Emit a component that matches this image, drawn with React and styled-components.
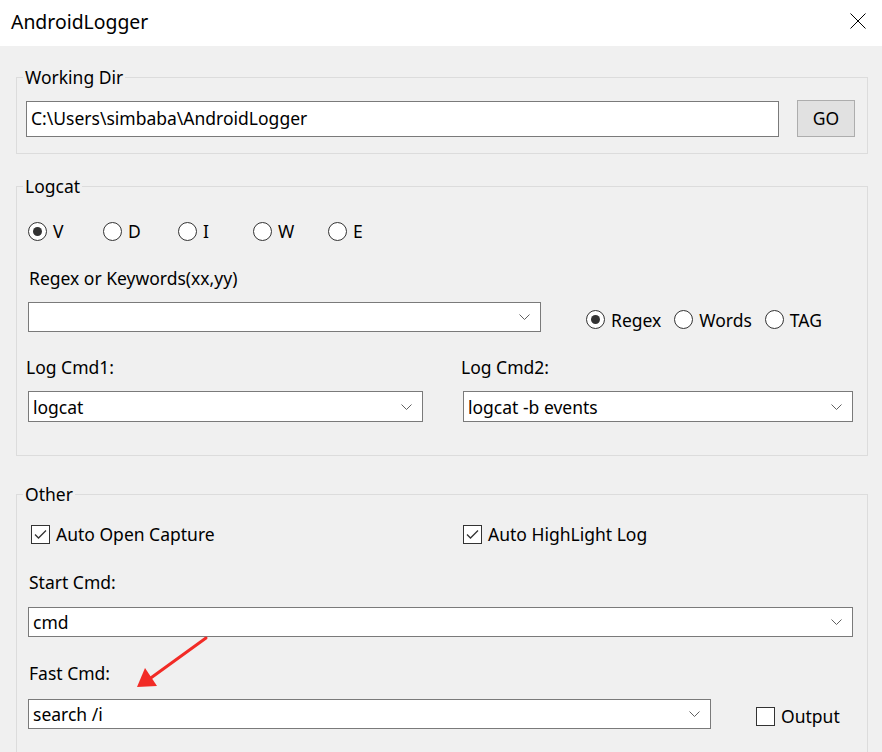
import React from 'react';
import styled, { createGlobalStyle } from 'styled-components';

const GlobalStyle = createGlobalStyle`
  html, body {
    margin: 0;
    padding: 0;
  }
  body {
    background: #f0f0f0;
    font-family: 'Segoe UI', 'Noto Sans', sans-serif;
    color: #000;
  }
`

const FONT = '17.5px';

const Window = styled.div`
  position: relative;
  width: 882px;
  height: 752px;
  overflow: hidden;
  background: #f0f0f0;
  display: flex;
  flex-direction: column;
`
const TitleBar = styled.div`
  height: 46px;
  flex-shrink: 0;
  box-sizing: border-box;
  padding: 0 16px 0 11px;
  background: #fff;
  display: flex;
  align-items: center;
  justify-content: space-between;
`
const Title = styled.div`
  font-size: 19.4px;
  line-height: 24px;
  margin-top: -3px;
`
const CloseIcon = styled.svg`
  width: 16px;
  height: 16px;
  margin-top: -5px;
`
const Body = styled.div`
  padding: 20px 14px 0 16px;
  display: flex;
  flex-direction: column;
`
const Group = styled.fieldset`
  margin: ${p => p.$top || 0}px 0 0;
  padding: 0;
  min-width: 0;
  border: 1px solid #dcdcdc;
`
const Legend = styled.legend`
  margin-left: 6px;
  padding: 0 2px;
  font-size: ${FONT};
  line-height: 22px;
`
const GroupInner = styled.div`
  padding: ${p => p.$pad};
  display: flex;
  flex-direction: column;
`
const Row = styled.div`
  display: flex;
  align-items: center;
  margin-top: ${p => p.$top || 0}px;
`
const TextBox = styled.div`
  flex: 1;
  height: 36px;
  box-sizing: border-box;
  padding: 0 0 2px 4px;
  border: 1px solid #7a7a7a;
  background: #fff;
  display: flex;
  align-items: center;
  font-size: ${FONT};
`
const GoButton = styled.button`
  width: 58px;
  height: 37px;
  margin: -2px 0 0 18px;
  padding: 0;
  border: 1px solid #adadad;
  background: #e1e1e1;
  font-family: inherit;
  font-size: ${FONT};
  color: #000;
`
const Combo = styled.div`
  width: ${p => (p.$width ? `${p.$width}px` : 'auto')};
  flex: ${p => (p.$width ? 'none' : 1)};
  height: ${p => p.$height || 30}px;
  box-sizing: border-box;
  padding: 0 10px 0 4px;
  border: 1px solid #7a7a7a;
  background: #fff;
  display: flex;
  align-items: center;
  justify-content: space-between;
  font-size: ${FONT};
`
const Chevron = styled.svg`
  width: 11px;
  height: 6px;
  flex-shrink: 0;
`
const Label = styled.div`
  font-size: ${FONT};
  line-height: 24px;
  margin-top: ${p => p.$top || 0}px;
  margin-left: ${p => p.$left || 0}px;
`
const LevelRow = styled.div`
  display: grid;
  grid-template-columns: repeat(5, 75px);
`
const SideGroup = styled.div`
  display: flex;
  align-items: center;
  gap: 13px;
  margin: ${p => p.$shift || 0}px 0 0 45px;
`
const Option = styled.div`
  display: flex;
  align-items: center;
  gap: 6px;
  height: 24px;
  font-size: ${FONT};
`
const RadioCircle = styled.span`
  width: 19px;
  height: 19px;
  box-sizing: border-box;
  border: 1px solid #333;
  border-radius: 50%;
  background: #fff;
  display: flex;
  align-items: center;
  justify-content: center;

  &::after {
    content: '';
    display: ${p => (p.$checked ? 'block' : 'none')};
    width: 9px;
    height: 9px;
    border-radius: 50%;
    background: #333;
  }
`
const CheckBox = styled.span`
  width: 19px;
  height: 19px;
  box-sizing: border-box;
  border: 1px solid #333;
  background: #fff;
  display: flex;
  align-items: center;
  justify-content: center;
`
const CmdGrid = styled.div`
  display: grid;
  grid-template-columns: 395px 1fr;
  column-gap: 40px;
  margin-top: 23px;
`
const Column = styled.div`
  display: flex;
  flex-direction: column;
`
const CheckGrid = styled.div`
  display: grid;
  grid-template-columns: 432px 1fr;
  padding-left: 3px;
`
const Arrow = styled.svg`
  position: absolute;
  left: 130px;
  top: 630px;
  width: 90px;
  height: 65px;
  pointer-events: none;
`

const ChevronIcon = () => (
  <Chevron viewBox="0 0 11 6">
    <polyline points="0.5,0.5 5.5,5.5 10.5,0.5" fill="none" stroke="#606060" strokeWidth="1" />
  </Chevron>
)

const Radio = ({ label, checked }) => (
  <Option>
    <RadioCircle $checked={checked} />
    {label}
  </Option>
)

const Check = ({ label, checked }) => (
  <Option>
    <CheckBox>
      {checked && (
        <svg width="13" height="11" viewBox="0 0 13 11">
          <polyline points="1,5.5 4.5,9 12,1.5" fill="none" stroke="#333" strokeWidth="1.3" />
        </svg>
      )}
    </CheckBox>
    {label}
  </Option>
)

const DropBox = ({ value, width, height }) => (
  <Combo $width={width} $height={height}>
    <span>{value}</span>
    <ChevronIcon />
  </Combo>
)

const levels = ['V', 'D', 'I', 'W', 'E'];

const App = () => {
  return (
    <Window>
      <GlobalStyle />
      <TitleBar>
        <Title>AndroidLogger</Title>
        <CloseIcon viewBox="0 0 16 16">
          <path d="M0.5 0.5 L15.5 15.5 M15.5 0.5 L0.5 15.5" stroke="#000" strokeWidth="1" fill="none" />
        </CloseIcon>
      </TitleBar>

      <Body>
        <Group>
          <Legend>Working Dir</Legend>
          <GroupInner $pad="13px 12px 16px 9px">
            <Row>
              <TextBox>C:\Users\simbaba\AndroidLogger</TextBox>
              <GoButton>GO</GoButton>
            </Row>
          </GroupInner>
        </Group>

        <Group $top={21}>
          <Legend>Logcat</Legend>
          <GroupInner $pad="22px 14px 33px 11px">
            <LevelRow>
              {levels.map((lv, i) => (
                <Radio key={lv} label={lv} checked={i === 0} />
              ))}
            </LevelRow>
            <Label $top={23} $left={1}>Regex or Keywords(xx,yy)</Label>
            <Row $top={12}>
              <DropBox value="" width={513} />
              <SideGroup $shift={5}>
                <Radio label="Regex" checked />
                <Radio label="Words" />
                <Radio label="TAG" />
              </SideGroup>
            </Row>
            <CmdGrid>
              <Column>
                <Label $left={-2}>Log Cmd1:</Label>
                <Row $top={12}>
                  <DropBox value="logcat" height={31} />
                </Row>
              </Column>
              <Column>
                <Label $left={-2}>Log Cmd2:</Label>
                <Row $top={12}>
                  <DropBox value="logcat -b events" height={31} />
                </Row>
              </Column>
            </CmdGrid>
          </GroupInner>
        </Group>

        <Group $top={27}>
          <Legend>Other</Legend>
          <GroupInner $pad="17px 14px 40px 11px">
            <CheckGrid>
              <Check label="Auto Open Capture" checked />
              <Check label="Auto HighLight Log" checked />
            </CheckGrid>
            <Label $top={24} $left={1}>Start Cmd:</Label>
            <Row $top={13}>
              <DropBox value="cmd" />
            </Row>
            <Label $top={24} $left={1}>Fast Cmd:</Label>
            <Row $top={14}>
              <DropBox value="search /i" width={683} />
              <SideGroup $shift={4}>
                <Check label="Output" />
              </SideGroup>
            </Row>
          </GroupInner>
        </Group>
      </Body>

      <Arrow viewBox="0 0 90 65">
        <line x1="76" y1="8" x2="18" y2="50" stroke="#f22b26" strokeWidth="3" strokeLinecap="round" />
        <polygon points="7,57 15,38 27,56" fill="#f22b26" />
      </Arrow>
    </Window>
  );
};

export default App;
